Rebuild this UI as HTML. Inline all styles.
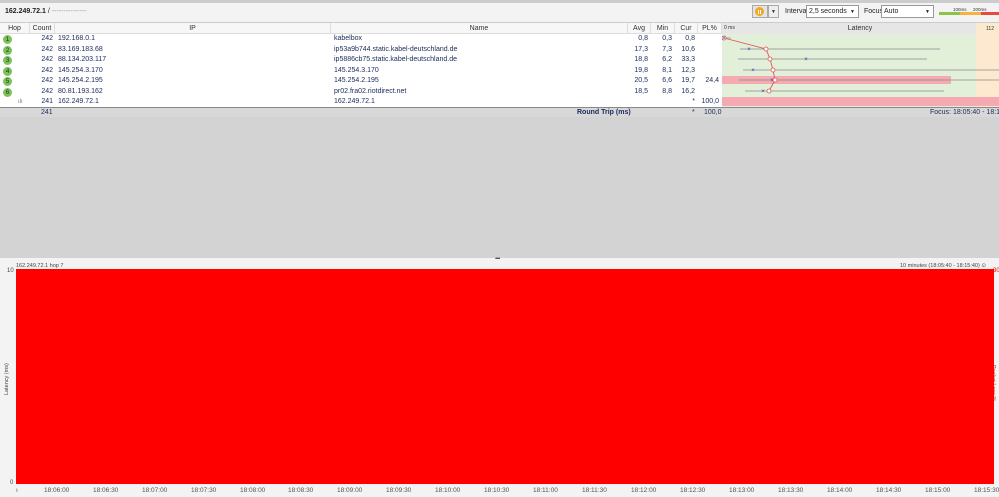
<!DOCTYPE html><html><head><style>
*{margin:0;padding:0;box-sizing:border-box;white-space:nowrap}
body{width:999px;height:497px;overflow:hidden;background:#f3f3f3;font-family:"Liberation Sans",sans-serif;font-size:7px;color:#1a2a5a;position:relative}
.a{position:absolute}
.r{text-align:right}
.row{position:absolute;left:0;width:722px;height:10.5px;line-height:10.5px}
.c{position:absolute}
.hop{position:absolute;left:3px;top:1px;width:9px;height:9px;border-radius:50%;background:#7cc15a;color:#1a4010;font-size:6.5px;line-height:9px;text-align:center}
.th{position:absolute;top:23px;height:11px;line-height:11px;color:#333;text-align:center;border-right:1px solid #ddd}
.xl{position:absolute;top:487px;font-size:6.5px;color:#555}
</style></head><body>
<div class="a" style="left:0;top:0;width:999px;height:3px;background:#ccc"></div>
<div class="a" style="left:0;top:3px;width:999px;height:20px;background:#f3f3f3;border-bottom:1px solid #ccc"></div>
<div class="a" style="left:5px;top:8px;font-size:7px;color:#222"><b>162.249.72.1</b> / <span style="color:#999">---------------</span></div>
<div class="a" style="left:752px;top:5px;width:16px;height:13px;background:#e4e4e4;border:1px solid #aaa"></div>
<div class="a" style="left:755px;top:7px;width:9px;height:9px;border-radius:50%;background:#f5a623"></div>
<div class="a" style="left:758px;top:9.5px;width:1px;height:4px;background:#fff"></div><div class="a" style="left:760px;top:9.5px;width:1px;height:4px;background:#fff"></div>
<div class="a" style="left:768px;top:5px;width:11px;height:13px;background:#eee;border:1px solid #aaa;font-size:5px;text-align:center;line-height:12px">▼</div>
<div class="a" style="left:785px;top:8px;color:#222">Interval</div>
<div class="a" style="left:806px;top:5px;width:53px;height:13px;background:#fff;border:1px solid #999;padding:2px;color:#222">2,5 seconds<span class="a" style="right:3px;top:3px;font-size:5px">▼</span></div>
<div class="a" style="left:864px;top:8px;color:#222">Focus</div>
<div class="a" style="left:881px;top:5px;width:53px;height:13px;background:#fff;border:1px solid #999;padding:2px;color:#222">Auto<span class="a" style="right:3px;top:3px;font-size:5px">▼</span></div>
<div class="a" style="left:953px;top:7px;font-size:4.5px;color:#333">100ms</div><div class="a" style="left:973px;top:7px;font-size:4.5px;color:#333">200ms</div>
<div class="a" style="left:939px;top:12px;width:21px;height:3px;background:#8bc34a"></div>
<div class="a" style="left:960px;top:12px;width:21px;height:3px;background:#f5b342"></div>
<div class="a" style="left:981px;top:12px;width:18px;height:3px;background:#e84a3f"></div>
<div class="a" style="left:0;top:23px;width:999px;height:11px;background:#f7f7f7;border-bottom:1px solid #ddd"></div>
<div class="th" style="left:0;width:30px">Hop</div><div class="th" style="left:30px;width:25px">Count</div><div class="th" style="left:55px;width:276px">IP</div><div class="th" style="left:331px;width:297px">Name</div><div class="th" style="left:628px;width:23px">Avg</div><div class="th" style="left:651px;width:24px">Min</div><div class="th" style="left:675px;width:23px">Cur</div><div class="th" style="left:698px;width:24px">PL%</div>
<div class="th" style="left:722px;width:277px;background:#e6e6e6">Latency</div>
<div class="a" style="left:724px;top:25px;font-size:5px;color:#333">0 ms</div>
<div class="a" style="left:0;top:34px;width:999px;height:73px;background:#fff"></div>
<div class="a" style="left:722px;top:34px;width:254px;height:73px;background:#e2f0d9"></div>
<div class="a" style="left:976px;top:34px;width:23px;height:73px;background:#fde9d0"></div>
<div class="a" style="left:976px;top:23px;width:23px;height:11px;background:#fde9d0;font-size:5px;color:#333;padding:3px 0 0 10px">112</div>
<div class="a" style="left:722px;top:76px;width:229px;height:8px;background:#f4aab0"></div>
<div class="a" style="left:722px;top:97px;width:277px;height:9px;background:#f4aab0"></div>
<svg class="a" style="left:722px;top:34px" width="277" height="73">
<g stroke="#888" stroke-width="0.7">
<line x1="2" y1="4" x2="9" y2="4"/><line x1="18" y1="15" x2="218" y2="15"/><line x1="16" y1="25" x2="205" y2="25"/><line x1="21" y1="36" x2="277" y2="36"/><line x1="17" y1="46" x2="277" y2="46"/><line x1="23" y1="57" x2="222" y2="57"/></g>
<polyline points="2,4 44,15 48,25 51,36 53,46 47,57" fill="none" stroke="#e05555" stroke-width="0.9"/>
<g fill="#fff" stroke="#e05555" stroke-width="0.8"><circle cx="2" cy="4" r="2"/><circle cx="44" cy="15" r="2"/><circle cx="48" cy="25" r="2"/><circle cx="51" cy="36" r="2"/><circle cx="53" cy="46" r="2"/><circle cx="47" cy="57" r="2"/></g>
<g fill="#33c" font-size="6" text-anchor="middle" font-family="Liberation Sans"><text x="2" y="6">×</text><text x="27" y="17">×</text><text x="84" y="27">×</text><text x="31" y="38">×</text><text x="50" y="48">×</text><text x="41" y="59">×</text></g>
</svg>
<div class="row" style="top:34px"><div class="hop">1</div><div class="c r" style="left:30px;width:23px">242</div><div class="c" style="left:58px">192.168.0.1</div><div class="c" style="left:334px">kabelbox</div><div class="c r" style="left:628px;width:20px">0,8</div><div class="c r" style="left:651px;width:21px">0,3</div><div class="c r" style="left:675px;width:20px">0,8</div></div>
<div class="row" style="top:44.5px"><div class="hop">2</div><div class="c r" style="left:30px;width:23px">242</div><div class="c" style="left:58px">83.169.183.68</div><div class="c" style="left:334px">ip53a9b744.static.kabel-deutschland.de</div><div class="c r" style="left:628px;width:20px">17,3</div><div class="c r" style="left:651px;width:21px">7,3</div><div class="c r" style="left:675px;width:20px">10,6</div></div>
<div class="row" style="top:55px"><div class="hop">3</div><div class="c r" style="left:30px;width:23px">242</div><div class="c" style="left:58px">88.134.203.117</div><div class="c" style="left:334px">ip5886cb75.static.kabel-deutschland.de</div><div class="c r" style="left:628px;width:20px">18,8</div><div class="c r" style="left:651px;width:21px">6,2</div><div class="c r" style="left:675px;width:20px">33,3</div></div>
<div class="row" style="top:65.5px"><div class="hop">4</div><div class="c r" style="left:30px;width:23px">242</div><div class="c" style="left:58px">145.254.3.170</div><div class="c" style="left:334px">145.254.3.170</div><div class="c r" style="left:628px;width:20px">19,8</div><div class="c r" style="left:651px;width:21px">8,1</div><div class="c r" style="left:675px;width:20px">12,3</div></div>
<div class="row" style="top:76px"><div class="hop">5</div><div class="c r" style="left:30px;width:23px">242</div><div class="c" style="left:58px">145.254.2.195</div><div class="c" style="left:334px">145.254.2.195</div><div class="c r" style="left:628px;width:20px">20,5</div><div class="c r" style="left:651px;width:21px">6,6</div><div class="c r" style="left:675px;width:20px">19,7</div><div class="c r" style="left:698px;width:21px">24,4</div></div>
<div class="row" style="top:86.5px"><div class="hop">6</div><div class="c r" style="left:30px;width:23px">242</div><div class="c" style="left:58px">80.81.193.162</div><div class="c" style="left:334px">pr02.fra02.riotdirect.net</div><div class="c r" style="left:628px;width:20px">18,5</div><div class="c r" style="left:651px;width:21px">8,8</div><div class="c r" style="left:675px;width:20px">16,2</div></div>
<div class="row" style="top:97px"><div class="c" style="left:18px;color:#777;font-size:6px">ılı</div><div class="c r" style="left:30px;width:23px">241</div><div class="c" style="left:58px">162.249.72.1</div><div class="c" style="left:334px">162.249.72.1</div><div class="c r" style="left:675px;width:20px">*</div><div class="c r" style="left:698px;width:21px">100,0</div></div>
<div class="a" style="left:0;top:107px;width:999px;height:151px;background:#d3d3d3;border-top:1px solid #888"></div>
<div class="a" style="left:0;top:108px;width:999px;height:9px;line-height:9px;background:#d8d8d8"><span class="a" style="left:41px">241</span><b class="a" style="left:577px">Round Trip (ms)</b><span class="a" style="left:692px">*</span><span class="a" style="left:704px">100,0</span><span class="a" style="left:930px">Focus: 18:05:40 - 18:15:40</span></div>
<div class="a" style="left:495px;top:256px;font-size:7px;color:#555;letter-spacing:-1px">•••</div>
<div class="a" style="left:0;top:259px;width:999px;height:238px;background:#f3f3f3"></div>
<div class="a" style="left:16px;top:263px;font-size:5.5px;color:#444">162.249.72.1 hop 7</div>
<div class="a" style="left:900px;top:263px;font-size:5.5px;color:#444">10 minutes (18:05:40 - 18:15:40) ⊙</div>
<div class="a" style="left:7px;top:268px;font-size:6px;color:#444">10</div>
<div class="a" style="left:10px;top:480px;font-size:6px;color:#444">0</div>
<div class="a" style="left:993px;top:268px;font-size:6px;color:#e00">30</div>
<div class="a" style="left:4px;top:395px;font-size:5.5px;color:#444;transform:rotate(-90deg);transform-origin:left top">Latency (ms)</div>
<div class="a" style="left:996px;top:365px;font-size:5.5px;color:#e00;transform:rotate(90deg);transform-origin:left top">Packet Loss %</div>
<div class="a" style="left:16px;top:269px;width:978px;height:215px;background:#ff0000"></div>
<div class="xl" style="left:16px">ı</div>
<div class="xl" style="left:44px">18:06:00</div><div class="xl" style="left:93px">18:06:30</div><div class="xl" style="left:142px">18:07:00</div><div class="xl" style="left:191px">18:07:30</div><div class="xl" style="left:240px">18:08:00</div><div class="xl" style="left:288px">18:08:30</div><div class="xl" style="left:337px">18:09:00</div><div class="xl" style="left:386px">18:09:30</div><div class="xl" style="left:435px">18:10:00</div><div class="xl" style="left:484px">18:10:30</div><div class="xl" style="left:533px">18:11:00</div><div class="xl" style="left:582px">18:11:30</div><div class="xl" style="left:631px">18:12:00</div><div class="xl" style="left:680px">18:12:30</div><div class="xl" style="left:729px">18:13:00</div><div class="xl" style="left:778px">18:13:30</div><div class="xl" style="left:827px">18:14:00</div><div class="xl" style="left:876px">18:14:30</div><div class="xl" style="left:925px">18:15:00</div><div class="xl" style="left:974px">18:15:30</div>
</body></html>
